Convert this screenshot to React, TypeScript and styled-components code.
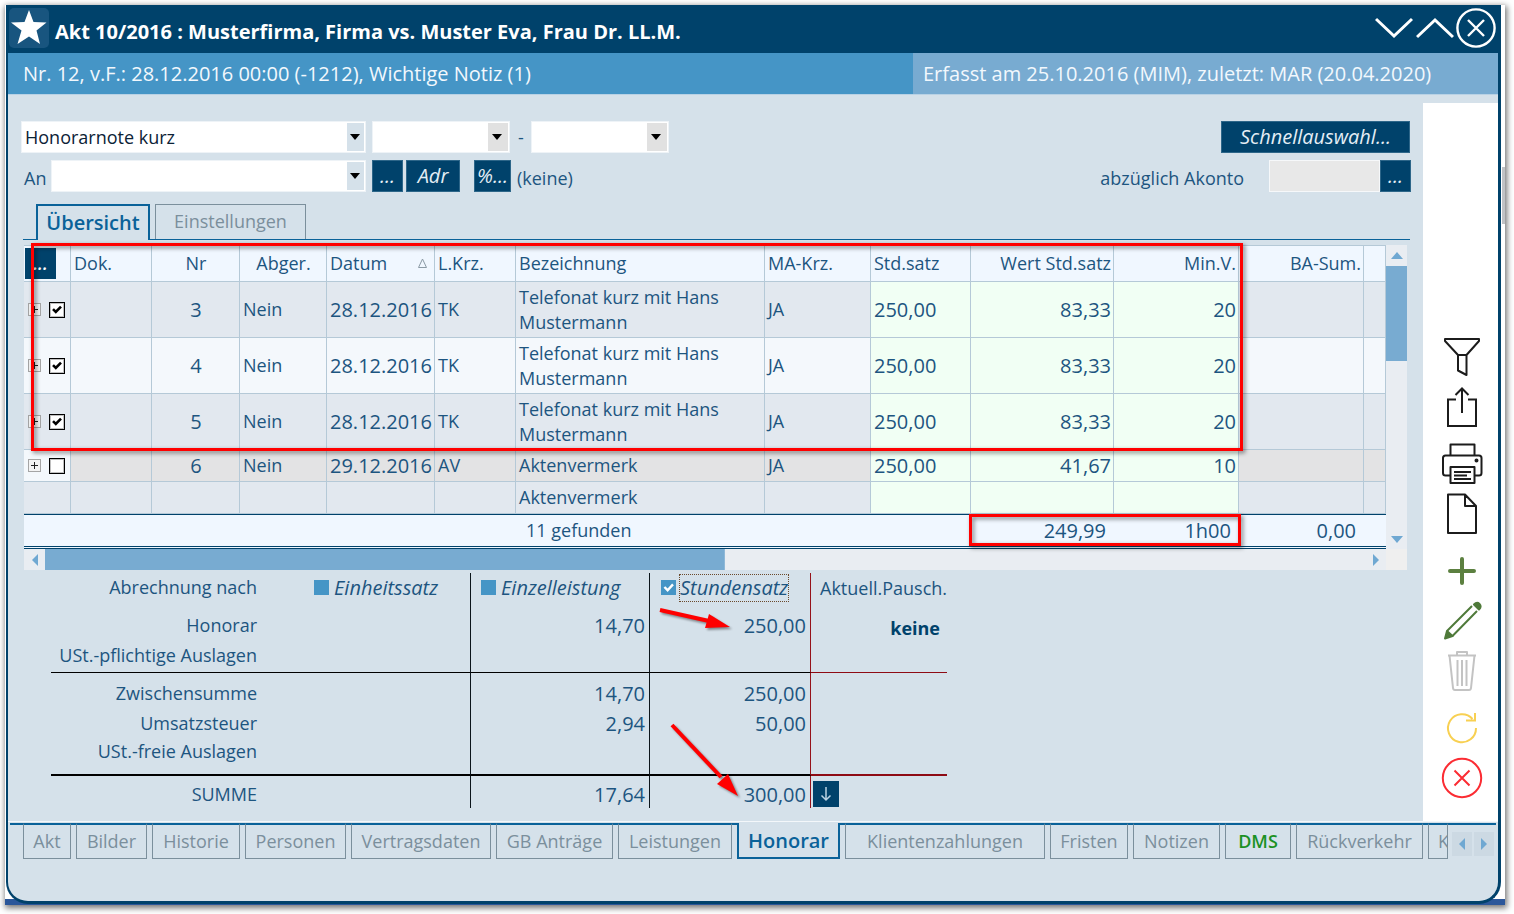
import React from "react";
import styled, { createGlobalStyle, css } from "styled-components";

const c = {
  navy: "#00426b",
  blue: "#4595c6",
  sky: "#78abd1",
  page: "#d5e1ea",
  ink: "#1d5580",
  accent: "#0a6299",
  muted: "#7b8f9c",
  line: "#b5c9d7",
  track: "#e9edf2",
  red: "#ff0000",
};

const GlobalStyle = createGlobalStyle`
  *, *::before, *::after { box-sizing: border-box; }
  body {
    margin: 0;
    background: #fff;
    color: ${c.ink};
    font-family: "Open Sans", "Noto Sans", sans-serif;
    font-size: 18px;
    line-height: 25px;
  }
  button, input, select { font: inherit; color: inherit; margin: 0; border-radius: 0; }
  button { padding: 0; cursor: pointer; }
`;

/* ---------- window frame ---------- */

const Desktop = styled.div`
  display: flex;
  min-height: 100vh;
  padding: 5px 9px 9px 5px;
`;

const Backdrop = styled.div`
  flex: 1;
  min-width: 0;
  display: flex;
  padding: 0 4px 1px 1px;
  background: linear-gradient(#c1c3c6, #c1c3c6) right 162px / 3px 57px no-repeat,
    linear-gradient(#2b579a, #2b579a) left bottom / 100% 6px no-repeat, #fff;
  box-shadow: 1px 2px 6px 1px rgba(0, 0, 0, 0.55);
`;

const Window = styled.main`
  flex: 1;
  min-width: 0;
  display: flex;
  flex-direction: column;
  background: ${c.page};
  border: solid ${c.navy};
  border-width: 0 3px 3px 2px;
  border-radius: 0 0 22px 22px;
`;

const TitleBar = styled.header`
  display: flex;
  align-items: center;
  gap: 6px;
  height: 48px;
  padding-left: 1px;
  background: ${c.navy};
  color: #fff;
`;

const StarTile = styled.span`
  display: flex;
  width: 40px;
  height: 40px;
  margin-bottom: 2px;
  border-radius: 5px;
  background: #18557f;
`;

const Title = styled.h1`
  flex: 1;
  margin: 0;
  padding-top: 4px;
  font-size: 20px;
  font-weight: 700;
  white-space: nowrap;
`;

const WindowButtons = styled.div`
  display: flex;
  gap: 1px;
  padding: 0 2px 2px 0;
`;

const PlainButton = styled.button`
  display: flex;
  align-items: center;
  justify-content: center;
  width: 40px;
  height: 44px;
  border: 0;
  background: none;
`;

const InfoBar = styled.div`
  display: flex;
  height: 42px;
  border-bottom: 1px solid #b9d2e5;
  background: ${c.blue};
  color: #f2f8fd;
  font-size: 20px;
  line-height: 42px;
  white-space: nowrap;
`;

const InfoLeft = styled.div`
  flex: 1;
  padding-left: 15px;
`;

const InfoRight = styled.div`
  width: 585px;
  padding-left: 10px;
  background: ${c.sky};
`;

const Body = styled.div`
  flex: 1;
  display: flex;
`;

const Content = styled.div`
  flex: 1;
  min-width: 0;
  padding: 26px 12px 0 13px;
`;

const Toolbar = styled.nav`
  width: 75px;
  margin-top: 8px;
  padding: 0 0 18px 2px;
  display: flex;
  flex-direction: column;
  align-items: center;
  justify-content: flex-end;
  gap: 7px;
  background: #fff;
`;

const ToolGroup = styled.div`
  display: flex;
  flex-direction: column;
`;

const ToolButton = styled.button`
  display: flex;
  align-items: center;
  justify-content: center;
  width: 50px;
  height: 50px;
  border: 0;
  background: none;
`;

/* ---------- filter area ---------- */

const FilterRow = styled.div`
  display: flex;
  align-items: center;
  height: 32px;
  margin-bottom: 7px;
`;

const Spacer = styled.div`
  flex: 1;
`;

const SelectBox = styled.span<{ $w: number; $grey?: boolean }>`
  position: relative;
  display: flex;
  width: ${(p) => p.$w}px;
  height: 32px;
  margin-right: 6px;
  &::before {
    content: "";
    position: absolute;
    right: 2px;
    top: 2px;
    bottom: 2px;
    width: ${(p) => (p.$grey ? 20 : 17)}px;
    background: ${(p) => (p.$grey ? "#e1e1e1" : c.page)};
    pointer-events: none;
  }
  &::after {
    content: "";
    position: absolute;
    right: ${(p) => (p.$grey ? 8 : 6)}px;
    top: 13px;
    border: 5px solid transparent;
    border-top: 6px solid #000;
    border-bottom: 0;
    pointer-events: none;
  }
`;

const Select = styled.select`
  appearance: none;
  width: 100%;
  height: 100%;
  padding: 0 22px 0 3px;
  border: 1px solid #eef3f7;
  background: #fff;
  color: #0b2236;
`;

const Dash = styled.span`
  width: 15px;
  padding-left: 2px;
`;

const AnLabel = styled.label`
  width: 30px;
  padding: 4px 0 0 3px;
`;

const DarkButton = styled.button<{ $w: number; $gap?: number }>`
  width: ${(p) => p.$w}px;
  height: 32px;
  margin-right: ${(p) => p.$gap ?? 0}px;
  border: 1px solid #2d6689;
  background: ${c.navy};
  color: #e4eef5;
  font-size: 20px;
  font-style: italic;
  line-height: 28px;
  white-space: nowrap;
`;

const FieldLabel = styled.label`
  padding: 4px 25px 0 0;
`;

const Note = styled.span`
  padding-top: 4px;
`;

const AmountInput = styled.input`
  width: 111px;
  height: 32px;
  border: 1px solid #f6f8fa;
  background: #e8e8e8;
`;

/* ---------- upper tabs ---------- */

const TabStrip = styled.div`
  display: flex;
  gap: 5px;
  height: 37px;
  margin: 12px 1px 0 2px;
  padding-left: 13px;
  background: linear-gradient(${c.accent}, ${c.accent}) left 35px / 100% 1px no-repeat;
`;

const TopTab = styled.button<{ $active?: boolean; $w: number }>`
  width: ${(p) => p.$w}px;
  height: ${(p) => (p.$active ? 36 : 35)}px;
  padding-bottom: 2px;
  border: solid;
  border-width: ${(p) => (p.$active ? "2px 2px 0" : "1px 1px 0")};
  border-color: ${(p) => (p.$active ? c.accent : c.muted)};
  background: ${c.page};
  color: ${(p) => (p.$active ? c.accent : c.muted)};
  font-size: ${(p) => (p.$active ? 20 : 18)}px;
  font-weight: ${(p) => (p.$active ? 600 : 400)};
`;

/* ---------- services grid ---------- */

const GridFrame = styled.section`
  position: relative;
  display: grid;
  grid-template-columns: minmax(0, 1fr) 21px;
  margin: 4px 4px 0 3px;
`;

const Grid = styled.table`
  width: 100%;
  table-layout: fixed;
  border-collapse: separate;
  border-spacing: 0;
`;

type Align = "left" | "center" | "right";

const Head = styled.th<{ $align?: Align }>`
  height: 37px;
  padding: 0 2px 0 3px;
  border: solid ${c.line};
  border-width: 1px 1px 1px 0;
  background: #f0f7ff;
  font-weight: 400;
  text-align: ${(p) => p.$align ?? "left"};
  white-space: nowrap;
`;

const HeadInner = styled.span`
  display: flex;
  align-items: center;
  justify-content: space-between;
  padding-right: 4px;
`;

const Row = styled.tr<{ $h: number; $bg: string }>`
  height: ${(p) => p.$h}px;
  background: ${(p) => p.$bg};
`;

const Cell = styled.td<{ $align?: Align; $num?: boolean; $green?: boolean; $pale?: boolean }>`
  padding: 0 2px 0 3px;
  border: solid ${c.line};
  border-width: 0 1px 1px 0;
  text-align: ${(p) => p.$align ?? "left"};
  ${(p) => p.$num && css`font-size: 20px;`}
  ${(p) => p.$green && css`background: #f1fff4;`}
  ${(p) => p.$pale && css`background: #f4f8fc;`}
`;

const Foot = styled.td<{ $align?: Align; $num?: boolean }>`
  height: 35px;
  padding: 0 8px 0 10px;
  border-top: 1px solid ${c.navy};
  border-bottom: 3px double ${c.navy};
  background: #f0f7ff;
  text-align: ${(p) => p.$align ?? "left"};
  font-size: ${(p) => (p.$num ? 20 : 18)}px;
`;

const Picker = styled.div`
  display: flex;
  align-items: center;
  gap: 8px;
  padding-left: 1px;
`;

const Expander = styled.button`
  display: flex;
  width: 13px;
  height: 13px;
  border: 1px solid #a5a5a5;
  background: #f4f4f4;
  align-items: center;
  justify-content: center;
`;

const RowCheck = styled.input`
  appearance: none;
  width: 16px;
  height: 16px;
  border: 1px solid #000;
  outline: 1px solid rgba(0, 0, 0, 0.25);
  outline-offset: -2px;
  background: #fff;
  &:checked {
    background: #fff
      url("data:image/svg+xml,%3Csvg xmlns='http://www.w3.org/2000/svg' viewBox='0 0 14 14'%3E%3Cpath d='M3 6.2 L5.8 9 L11 3.6' fill='none' stroke='black' stroke-width='2.6'/%3E%3C/svg%3E");
  }
`;

const MenuButton = styled.button`
  display: block;
  width: 31px;
  height: 31px;
  margin-left: -2px;
  border: 0;
  background: ${c.navy};
  color: #fff;
  font-style: italic;
  font-weight: 600;
`;

const VTrack = styled.div`
  display: flex;
  flex-direction: column;
  align-items: center;
  background: ${c.track};
`;

const VThumb = styled.div`
  flex: 1;
  width: 100%;
  background: linear-gradient(${c.sky}, ${c.sky}) top / 100% 95px no-repeat;
`;

const HTrack = styled.div`
  display: flex;
  height: 21px;
  align-items: center;
  background: ${c.track};
`;

const HThumb = styled.div`
  flex: 1;
  height: 100%;
  background: linear-gradient(${c.sky}, ${c.sky}) left / 51.5% 100% no-repeat;
`;

const Corner = styled.div`
  background: #efefef;
`;

const ScrollButton = styled.button<{ $tile?: boolean }>`
  display: flex;
  align-items: center;
  justify-content: center;
  width: ${(p) => (p.$tile ? 20 : 21)}px;
  height: ${(p) => (p.$tile ? 24 : 21)}px;
  border: 0;
  background: ${(p) => (p.$tile ? "#ccd9e3" : "none")};
`;

const RedMark = styled.div`
  position: absolute;
  border: 3px solid ${c.red};
  filter: drop-shadow(2px 2px 2px rgba(0, 0, 0, 0.5));
  pointer-events: none;
`;

const RowsMark = styled(RedMark)`
  top: -2px;
  left: 7px;
  right: 164px;
  height: 208px;
`;

const TotalsMark = styled(RedMark)`
  top: 269px;
  right: 166px;
  width: 272px;
  height: 32px;
`;

/* ---------- summary ---------- */

const SummaryFrame = styled.section`
  position: relative;
  width: 896px;
  margin: 3px 0 12px 30px;
`;

const Summary = styled.table`
  width: 100%;
  table-layout: fixed;
  border-collapse: separate;
  border-spacing: 0;
`;

const SumRow = styled.tr<{ $h: number; $rule?: number; $top?: number; $bottom?: number }>`
  height: ${(p) => p.$h}px;
  > * {
    padding-top: ${(p) => p.$top ?? 0}px;
    padding-bottom: ${(p) => p.$bottom ?? 0}px;
    border-bottom: ${(p) => p.$rule ?? 0}px solid #000;
  }
  > *:last-child {
    border-bottom-color: #8e0b14;
  }
`;

const SumLabel = styled.th`
  padding-left: 0;
  padding-right: 0;
  font-weight: 400;
  text-align: right;
  white-space: nowrap;
`;

const SumCell = styled.td<{ $wall?: string; $left?: number }>`
  padding-left: ${(p) => p.$left ?? 0}px;
  padding-right: 4px;
  border-right: ${(p) => (p.$wall ? `1px solid ${p.$wall}` : "0")};
  font-size: 20px;
  text-align: ${(p) => (p.$left === undefined ? "right" : "left")};
  white-space: nowrap;
`;

const Option = styled.label<{ $focus?: boolean }>`
  display: flex;
  align-items: center;
  gap: ${(p) => (p.$focus ? 3 : 4)}px;
  font-size: 20px;
  font-style: italic;
  line-height: 26px;
  > span {
    border: 1px ${(p) => (p.$focus ? "dotted #6b4a2c" : "solid transparent")};
  }
`;

const OptionCheck = styled.input`
  appearance: none;
  flex: none;
  width: 15px;
  height: 15px;
  background: ${c.blue};
  &:checked {
    background: ${c.blue}
      url("data:image/svg+xml,%3Csvg xmlns='http://www.w3.org/2000/svg' viewBox='0 0 15 15'%3E%3Cpath d='M3.4 7 L6.6 10.2 L12 4.4' fill='none' stroke='white' stroke-width='2.4'/%3E%3C/svg%3E");
  }
`;

const PauschText = styled.span`
  font-size: 18px;
`;

const Keine = styled.strong`
  display: block;
  padding: 6px 3px 0 0;
  color: ${c.navy};
  font-size: 18px;
  font-weight: 700;
  text-align: right;
`;

const DownButton = styled.button`
  display: flex;
  align-items: center;
  justify-content: center;
  width: 26px;
  height: 26px;
  border: 0;
  background: ${c.navy};
`;

const Arrows = styled.svg`
  position: absolute;
  left: 600px;
  top: 30px;
  filter: drop-shadow(2px 2px 1px rgba(0, 0, 0, 0.4));
  pointer-events: none;
`;

/* ---------- lower tabs ---------- */

const BottomBar = styled.footer`
  display: flex;
  height: 80px;
  border-top: 1px solid #f3f7fa;
  background: linear-gradient(${c.accent}, ${c.accent}) 2px 1px / calc(100% - 4px) 2px no-repeat;
`;

const BottomTabs = styled.div`
  flex: 1;
  min-width: 0;
  display: flex;
  gap: 5px;
  padding: 1px 0 0 15px;
  overflow: hidden;
`;

const BottomTab = styled.button<{ $w: number; $kind?: string }>`
  flex: none;
  width: ${(p) => p.$w}px;
  height: 36px;
  overflow: hidden;
  border: 1px solid ${c.muted};
  border-top: 2px solid ${c.accent};
  background: ${c.page};
  color: ${c.muted};
  white-space: nowrap;
  ${(p) => p.$kind === "dms" && css`color: #1c9123; font-weight: 600;`}
  ${(p) => p.$kind === "cut" && css`text-align: left; padding-left: 9px;`}
  ${(p) =>
    p.$kind === "active" &&
    css`
      border: 2px solid ${c.accent};
      border-top: 0;
      color: ${c.accent};
      font-size: 20px;
      font-weight: 600;
    `}
`;

const BottomScroll = styled.div`
  display: flex;
  gap: 2px;
  padding: 10px 4px 0 4px;
`;

/* ---------- drawings ---------- */

type Dir = "up" | "down" | "left" | "right";
const triangles: Record<Dir, string> = {
  up: "M0 9 L6 2 L12 9Z",
  down: "M0 3 L6 10 L12 3Z",
  left: "M9 0 L3 6 L9 12Z",
  right: "M3 0 L9 6 L3 12Z",
};

const Triangle = ({ dir }: { dir: Dir }) => (
  <svg width="12" height="12" viewBox="0 0 12 12">
    <path d={triangles[dir]} fill="#6fa8d2" />
  </svg>
);

const Glyph = ({ color, width = 2, children }: { color: string; width?: number; children: React.ReactNode }) => (
  <svg width="42" height="42" viewBox="0 0 42 42" fill="none" stroke={color} strokeWidth={width} strokeLinejoin="round">
    {children}
  </svg>
);

const FilterIcon = () => (
  <Glyph color="#1c1c1c">
    <path d="M4 3 H38 V5 L25.500 19 V39 L17 34.500 V19 L4 5 Z M17 19 H25.500" />
  </Glyph>
);
const ShareIcon = () => (
  <Glyph color="#1c1c1c">
    <path d="M15 13.500 H7 V40 H35 V13.500 H27 M21 27 V2.500 M14.500 9 L21 2.500 L27.500 9" strokeLinejoin="miter" />
  </Glyph>
);
const PrinterIcon = () => (
  <Glyph color="#1c1c1c">
    <path d="M9.500 12.500 V1.500 H33.500 V12.500 M9.500 32.500 H4.500 Q2 32.500 2 30 V15 Q2 12.500 4.500 12.500 H38 Q40.500 12.500 40.500 15 V30 Q40.500 32.500 38 32.500 H33.500 M9.500 24 H33.500 V40 H9.500 Z M13 29 H30 M13 32.500 H26 M13 36 H30" />
    <circle cx="35.500" cy="17.500" r="1" />
  </Glyph>
);
const FileIcon = () => (
  <Glyph color="#1c1c1c">
    <path d="M7 1.500 H24 L35 13 V40 H7 Z M24 1.500 V13 H35" />
  </Glyph>
);
const PlusIcon = () => (
  <Glyph color="#5c8040" width={4}>
    <path d="M21 9 V33 M9 21 H33" strokeLinecap="round" />
  </Glyph>
);
const PencilIcon = () => (
  <Glyph color="#4f7a3a" width={2}>
    <path d="M6 31 L31 6 M11.500 36 L36 11" />
    <path d="M4 38.500 L6 31 L11.500 36 Z" fill="#4f7a3a" />
    <path d="M33 4.500 Q36 1.500 38.500 4 Q41 6.500 38 9.500 Z" fill="#4f7a3a" />
  </Glyph>
);
const TrashIcon = () => (
  <Glyph color="#c3c3c3">
    <path d="M7 5.500 H35 M16 5.500 V2 H26 V5.500 M8.500 5.500 L12 38 Q12.200 40 14 40 H28 Q29.800 40 30 38 L33.500 5.500 M16.500 10 V36 M21 10 V36 M25.500 10 V36" />
  </Glyph>
);
const RefreshIcon = () => (
  <Glyph color="#f8d052">
    <path d="M35 21 A14 14 0 1 1 31.500 12 M34 6 V13.500 H25" strokeLinejoin="miter" />
  </Glyph>
);
const CancelIcon = () => (
  <Glyph color="#fb2c33">
    <circle cx="21" cy="21" r="19.200" />
    <path d="M13.500 13.500 L28.500 28.500 M28.500 13.500 L13.500 28.500" />
  </Glyph>
);

/* ---------- data ---------- */

const rows = [
  { nr: 3, date: "28.12.2016", krz: "TK", text: "Telefonat kurz mit Hans Mustermann", wert: "83,33", min: "20", on: true, h: 56, bg: "#e2e8ef" },
  { nr: 4, date: "28.12.2016", krz: "TK", text: "Telefonat kurz mit Hans Mustermann", wert: "83,33", min: "20", on: true, h: 56, bg: "#f4f8fc" },
  { nr: 5, date: "28.12.2016", krz: "TK", text: "Telefonat kurz mit Hans Mustermann", wert: "83,33", min: "20", on: true, h: 56, bg: "#e2e8ef" },
  { nr: 6, date: "29.12.2016", krz: "AV", text: "Aktenvermerk", wert: "41,67", min: "10", on: false, h: 32, bg: "#e3e3e4" },
];

const columnWidths = [47, 81, 88, 87, 108, 81, undefined, 106, 100, 143, 125, 125, 22];

const bottomTabs: { label: string; w: number; kind?: string }[] = [
  { label: "Akt", w: 48 },
  { label: "Bilder", w: 71 },
  { label: "Historie", w: 88 },
  { label: "Personen", w: 101 },
  { label: "Vertragsdaten", w: 140 },
  { label: "GB Anträge", w: 117 },
  { label: "Leistungen", w: 114 },
  { label: "Honorar", w: 103, kind: "active" },
  { label: "Klientenzahlungen", w: 200 },
  { label: "Fristen", w: 78 },
  { label: "Notizen", w: 87 },
  { label: "DMS", w: 66, kind: "dms" },
  { label: "Rückverkehr", w: 127 },
  { label: "K", w: 20, kind: "cut" },
];

const black = "#0c151b";
const wine = "#96121a";

export default function App() {
  return (
    <Desktop>
      <GlobalStyle />
      <Backdrop>
        <Window>
          <TitleBar>
            <StarTile>
              <svg width="40" height="40" viewBox="0 0 40 40">
                <path d="M20 2 L24.500 14 L37.500 14.500 L27.500 22.500 L31 36 L20 28.500 L8.500 36 L12.500 22.500 L2 14.500 L15.500 14 Z" fill="#fff" />
              </svg>
            </StarTile>
            <Title>Akt 10/2016 : Musterfirma, Firma vs. Muster Eva, Frau Dr. LL.M.</Title>
            <WindowButtons>
              <PlainButton aria-label="Nach unten">
                <svg width="38" height="22" viewBox="0 0 38 22" fill="none" stroke="#fff" strokeWidth="3">
                  <path d="M1 2 L19 19 L37 2" />
                </svg>
              </PlainButton>
              <PlainButton aria-label="Nach oben">
                <svg width="38" height="22" viewBox="0 0 38 22" fill="none" stroke="#fff" strokeWidth="3">
                  <path d="M1 20 L19 3 L37 20" />
                </svg>
              </PlainButton>
              <PlainButton aria-label="Schließen">
                <svg width="40" height="40" viewBox="0 0 40 40" fill="none" stroke="#fff" strokeWidth="2.4">
                  <circle cx="20" cy="20" r="18.600" />
                  <path d="M12 12 L28 28 M28 12 L12 28" />
                </svg>
              </PlainButton>
            </WindowButtons>
          </TitleBar>
          <InfoBar>
            <InfoLeft>Nr. 12, v.F.: 28.12.2016 00:00 (-1212), Wichtige Notiz (1)</InfoLeft>
            <InfoRight>Erfasst am 25.10.2016 (MIM), zuletzt: MAR (20.04.2020)</InfoRight>
          </InfoBar>

          <Body>
            <Content>
              <FilterRow>
                <SelectBox $w={345}>
                  <Select aria-label="Vorlage">
                    <option>Honorarnote kurz</option>
                  </Select>
                </SelectBox>
                <SelectBox $w={138} $grey>
                  <Select aria-label="Von"><option></option></Select>
                </SelectBox>
                <Dash>-</Dash>
                <SelectBox $w={138} $grey>
                  <Select aria-label="Bis"><option></option></Select>
                </SelectBox>
                <Spacer />
                <DarkButton $w={189} $gap={1}>Schnellauswahl...</DarkButton>
              </FilterRow>
              <FilterRow>
                <AnLabel htmlFor="an">An</AnLabel>
                <SelectBox $w={315}>
                  <Select id="an"><option></option></Select>
                </SelectBox>
                <DarkButton $w={31} $gap={3}>...</DarkButton>
                <DarkButton $w={54} $gap={14}>Adr</DarkButton>
                <DarkButton $w={37} $gap={6}>%...</DarkButton>
                <Note>(keine)</Note>
                <Spacer />
                <FieldLabel htmlFor="akonto">abzüglich Akonto</FieldLabel>
                <AmountInput id="akonto" />
                <DarkButton $w={31}>...</DarkButton>
              </FilterRow>

              <TabStrip>
                <TopTab $active $w={114}>Übersicht</TopTab>
                <TopTab $w={151}>Einstellungen</TopTab>
              </TabStrip>

              <GridFrame>
                <Grid>
                  <colgroup>
                    {columnWidths.map((w, i) => (
                      <col key={i} width={w} />
                    ))}
                  </colgroup>
                  <thead>
                    <tr>
                      <Head><MenuButton>...</MenuButton></Head>
                      <Head>Dok.</Head>
                      <Head $align="center">Nr</Head>
                      <Head $align="center">Abger.</Head>
                      <Head>
                        <HeadInner>
                          Datum
                          <svg width="11" height="11" viewBox="0 0 11 11" fill="none" stroke="#8b9aa5">
                            <path d="M1.500 9.500 L5.500 1 L9.500 9.500 Z" />
                          </svg>
                        </HeadInner>
                      </Head>
                      <Head>L.Krz.</Head>
                      <Head>Bezeichnung</Head>
                      <Head>MA-Krz.</Head>
                      <Head>Std.satz</Head>
                      <Head $align="right">Wert Std.satz</Head>
                      <Head $align="right">Min.V.</Head>
                      <Head $align="right">BA-Sum.</Head>
                      <Head />
                    </tr>
                  </thead>
                  <tbody>
                    {rows.map((r) => (
                      <Row key={r.nr} $h={r.h} $bg={r.bg}>
                        <Cell $pale={!r.on}>
                          <Picker>
                            <Expander aria-label={`Details ${r.nr}`}>
                              <svg width="7" height="7" viewBox="0 0 7 7" stroke="#222">
                                <path d="M3.500 0 V7 M0 3.500 H7" />
                              </svg>
                            </Expander>
                            <RowCheck type="checkbox" defaultChecked={r.on} aria-label={`Leistung ${r.nr}`} />
                          </Picker>
                        </Cell>
                        <Cell />
                        <Cell $align="center" $num>{r.nr}</Cell>
                        <Cell>Nein</Cell>
                        <Cell $num>{r.date}</Cell>
                        <Cell>{r.krz}</Cell>
                        <Cell>{r.text}</Cell>
                        <Cell>JA</Cell>
                        <Cell $num $green>250,00</Cell>
                        <Cell $num $green $align="right">{r.wert}</Cell>
                        <Cell $num $green $align="right">{r.min}</Cell>
                        <Cell />
                        <Cell />
                      </Row>
                    ))}
                    <Row $h={32} $bg="#e2e8ef">
                      <Cell /><Cell /><Cell /><Cell /><Cell /><Cell />
                      <Cell>Aktenvermerk</Cell>
                      <Cell />
                      <Cell $green /><Cell $green /><Cell $green />
                      <Cell /><Cell />
                    </Row>
                  </tbody>
                  <tfoot>
                    <tr>
                      <Foot colSpan={6} />
                      <Foot colSpan={3}>11 gefunden</Foot>
                      <Foot $num $align="right">249,99</Foot>
                      <Foot $num $align="right">1h00</Foot>
                      <Foot $num $align="right">0,00</Foot>
                      <Foot />
                    </tr>
                  </tfoot>
                </Grid>
                <VTrack>
                  <ScrollButton aria-label="Aufwärts"><Triangle dir="up" /></ScrollButton>
                  <VThumb />
                  <ScrollButton aria-label="Abwärts"><Triangle dir="down" /></ScrollButton>
                </VTrack>
                <HTrack>
                  <ScrollButton aria-label="Links"><Triangle dir="left" /></ScrollButton>
                  <HThumb />
                  <ScrollButton aria-label="Rechts"><Triangle dir="right" /></ScrollButton>
                </HTrack>
                <Corner />
                <RowsMark />
                <TotalsMark />
              </GridFrame>

              <SummaryFrame>
                <Summary>
                  <colgroup>
                    <col width={206} />
                    <col width={214} />
                    <col width={179} />
                    <col width={161} />
                    <col />
                  </colgroup>
                  <tbody>
                    <SumRow $h={37} $bottom={8}>
                      <SumLabel scope="row">Abrechnung nach</SumLabel>
                      <SumCell $wall={black} $left={57}>
                        <Option><OptionCheck type="checkbox" /><span>Einheitssatz</span></Option>
                      </SumCell>
                      <SumCell $wall={black} $left={10}>
                        <Option><OptionCheck type="checkbox" /><span>Einzelleistung</span></Option>
                      </SumCell>
                      <SumCell $wall={wine} $left={11}>
                        <Option $focus><OptionCheck type="checkbox" defaultChecked /><span>Stundensatz</span></Option>
                      </SumCell>
                      <SumCell $left={9}><PauschText>Aktuell.Pausch.</PauschText></SumCell>
                    </SumRow>
                    <SumRow $h={30}>
                      <SumLabel scope="row">Honorar</SumLabel>
                      <SumCell $wall={black} />
                      <SumCell $wall={black}>14,70</SumCell>
                      <SumCell $wall={wine}>250,00</SumCell>
                      <SumCell><Keine>keine</Keine></SumCell>
                    </SumRow>
                    <SumRow $h={32} $rule={1} $bottom={3}>
                      <SumLabel scope="row">USt.-pflichtige Auslagen</SumLabel>
                      <SumCell $wall={black} />
                      <SumCell $wall={black} />
                      <SumCell $wall={wine} />
                      <SumCell />
                    </SumRow>
                    <SumRow $h={36} $top={5}>
                      <SumLabel scope="row">Zwischensumme</SumLabel>
                      <SumCell $wall={black} />
                      <SumCell $wall={black}>14,70</SumCell>
                      <SumCell $wall={wine}>250,00</SumCell>
                      <SumCell />
                    </SumRow>
                    <SumRow $h={28}>
                      <SumLabel scope="row">Umsatzsteuer</SumLabel>
                      <SumCell $wall={black} />
                      <SumCell $wall={black}>2,94</SumCell>
                      <SumCell $wall={wine}>50,00</SumCell>
                      <SumCell />
                    </SumRow>
                    <SumRow $h={39} $rule={2} $bottom={8}>
                      <SumLabel scope="row">USt.-freie Auslagen</SumLabel>
                      <SumCell $wall={black} />
                      <SumCell $wall={black} />
                      <SumCell $wall={wine} />
                      <SumCell />
                    </SumRow>
                    <SumRow $h={32} $top={4}>
                      <SumLabel scope="row">SUMME</SumLabel>
                      <SumCell $wall={black} />
                      <SumCell $wall={black}>17,64</SumCell>
                      <SumCell $wall={wine}>300,00</SumCell>
                      <SumCell $left={2}>
                        <DownButton aria-label="Übernehmen">
                          <svg width="12" height="16" viewBox="0 0 12 16" fill="none" stroke="#b9d3e4" strokeWidth="1.500">
                            <path d="M6 1 V14 M1.500 9.500 L6 14 L10.500 9.500" />
                          </svg>
                        </DownButton>
                      </SumCell>
                    </SumRow>
                  </tbody>
                </Summary>
                <Arrows width="100" height="200" viewBox="0 0 100 200">
                  <path d="M9 7 L58 18" stroke={c.red} strokeWidth="4" />
                  <path d="M58 11 L79 24 L54 25 Z" fill={c.red} />
                  <path d="M21 122 L70 174" stroke={c.red} strokeWidth="4" />
                  <path d="M77 171 L87 193 L66 181 Z" fill={c.red} />
                </Arrows>
              </SummaryFrame>
            </Content>

            <Toolbar aria-label="Werkzeuge">
              <ToolGroup>
                <ToolButton aria-label="Filter"><FilterIcon /></ToolButton>
                <ToolButton aria-label="Teilen"><ShareIcon /></ToolButton>
              </ToolGroup>
              <ToolGroup>
                <ToolButton aria-label="Drucken"><PrinterIcon /></ToolButton>
                <ToolButton aria-label="Dokument"><FileIcon /></ToolButton>
              </ToolGroup>
              <ToolGroup>
                <ToolButton aria-label="Neu"><PlusIcon /></ToolButton>
                <ToolButton aria-label="Bearbeiten"><PencilIcon /></ToolButton>
                <ToolButton aria-label="Löschen"><TrashIcon /></ToolButton>
              </ToolGroup>
              <ToolGroup>
                <ToolButton aria-label="Aktualisieren"><RefreshIcon /></ToolButton>
                <ToolButton aria-label="Abbrechen"><CancelIcon /></ToolButton>
              </ToolGroup>
            </Toolbar>
          </Body>

          <BottomBar>
            <BottomTabs>
              {bottomTabs.map((t) => (
                <BottomTab key={t.label} $w={t.w} $kind={t.kind}>{t.label}</BottomTab>
              ))}
            </BottomTabs>
            <BottomScroll>
              <ScrollButton $tile aria-label="Vorige Karten"><Triangle dir="left" /></ScrollButton>
              <ScrollButton $tile aria-label="Weitere Karten"><Triangle dir="right" /></ScrollButton>
            </BottomScroll>
          </BottomBar>
        </Window>
      </Backdrop>
    </Desktop>
  );
}
